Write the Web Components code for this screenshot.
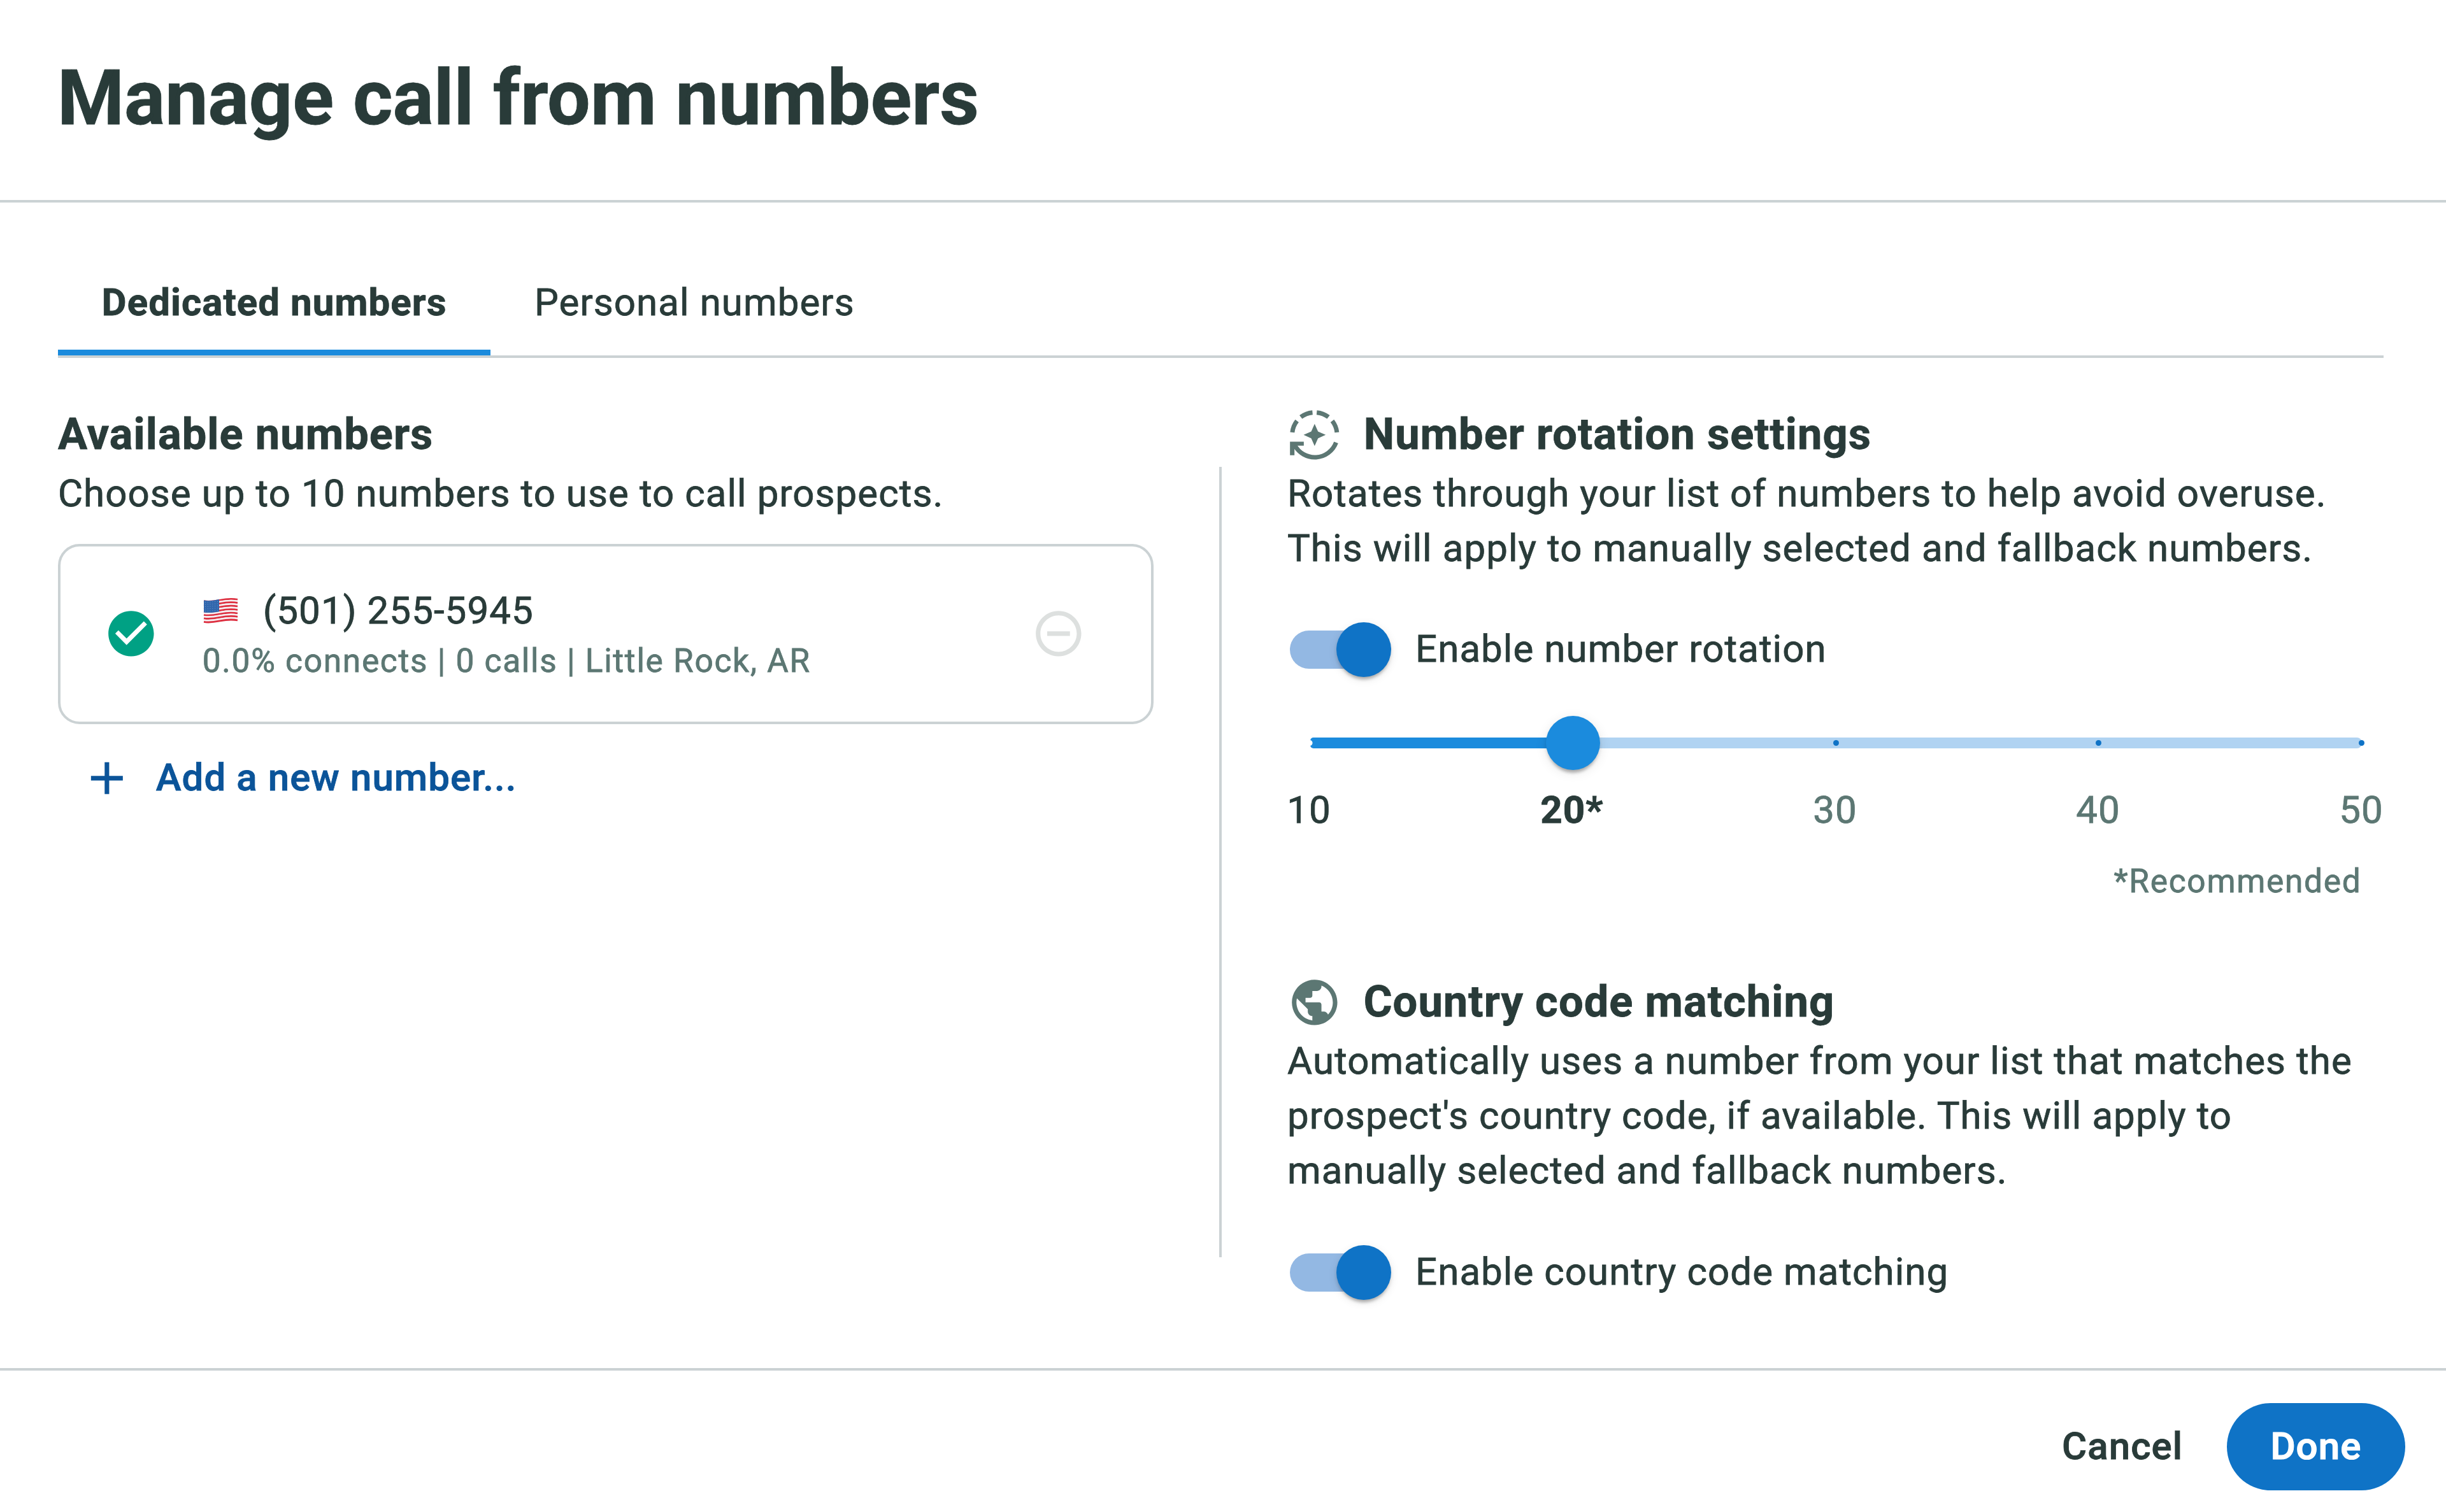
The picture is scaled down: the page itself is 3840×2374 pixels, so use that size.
<!DOCTYPE html>
<html lang="en">
<head>
<meta charset="utf-8">
<title>Manage call from numbers</title>
<style>
  html, body { margin: 0; height: 100%; }
  body {
    font-family: Roboto, "Liberation Sans", sans-serif;
    -webkit-text-stroke: .8px currentColor;
    background: #fff;
    color: #293b39;
    --ink: #293b39;
    --muted: #5c7773;
    --line: #cbd2d4;
    --primary: #0f73c6;
    --accent: #1b8bdd;
    overflow: hidden;
  }
</style>
</head>
<body>
<numbers-dialog></numbers-dialog>

<script>
const define = (name, html) => {
  const template = document.createElement('template');
  template.innerHTML = html;
  customElements.define(name, class extends HTMLElement {
    constructor() {
      super();
      this.attachShadow({ mode: 'open' }).append(template.content.cloneNode(true));
    }
  });
};

/* Icons: 24-unit Material grid drawn in an 86px box */
const ICONS = {
  check: '<path d="M12 2C6.48 2 2 6.48 2 12s4.48 10 10 10 10-4.48 10-10S17.52 2 12 2zm-2 15-5-5 1.41-1.41L10 14.17l7.59-7.59L19 8l-9 9z"/>',
  minus: '<path d="M7 11v2h10v-2H7zm5-9C6.48 2 2 6.48 2 12s4.48 10 10 10 10-4.48 10-10S17.52 2 12 2zm0 18c-4.41 0-8-3.59-8-8s3.59-8 8-8 8 3.59 8 8-3.59 8-8 8z"/>',
  plus: '<path d="M19 13h-6v6h-2v-6H5v-2h6V5h2v6h6v2z"/>',
  globe: '<path d="M12 2C6.48 2 2 6.48 2 12s4.48 10 10 10 10-4.48 10-10S17.52 2 12 2zm-1 17.93c-3.95-.49-7-3.85-7-7.93 0-.62.08-1.21.21-1.79L9 15v1c0 1.1.9 2 2 2v1.93zm6.9-2.54c-.26-.81-1-1.39-1.9-1.39h-1v-3c0-.55-.45-1-1-1H8v-2h2c.55 0 1-.45 1-1V7h2c1.1 0 2-.9 2-2v-.41c2.93 1.19 5 4.06 5 7.41 0 2.08-.8 3.97-2.1 5.39z"/>',
  rotate: `<g transform="translate(12 12) scale(.09337)">
    <g fill="none" stroke="currentColor" stroke-width="21">
      <path d="M-105-12A106 106 0 0 1-83-66"/>
      <path d="M-65-84A106 106 0 0 1-10-105.500"/>
      <path d="M105-12A106 106 0 0 0 83-66"/>
      <path d="M65-84A106 106 0 0 0 10-105.500"/>
      <path d="M101 36A107 107 0 0 1-94 48"/>
    </g>
    <path d="M-116 32H-51V51H-95V96H-116Z"/>
    <path d="M0-52 16-16 52 0 16 16 0 52-16 16-52 0-16-16Z"/>
  </g>`
};
customElements.define('ui-icon', class extends HTMLElement {
  connectedCallback() {
    if (this.shadowRoot) return;
    this.attachShadow({ mode: 'open' }).innerHTML = `
      <style>:host{display:block;width:85.7px;height:85.7px;flex:none}svg{display:block;width:100%;height:100%}</style>
      <svg viewBox="0 0 24 24" fill="currentColor">${ICONS[this.getAttribute('name')]}</svg>`;
  }
});

/* Waving United States flag */
customElements.define('us-flag', class extends HTMLElement {
  connectedCallback() {
    if (this.shadowRoot) return;
    const wave = y => `M0 ${y}C9 ${y + 1.5} 15 ${y + .5} 25 ${y - 1.5}S43 ${y - 4.5} 53 ${y - 2.5}`;
    const stripes = Array.from({ length: 13 }, (_, i) =>
      `<path d="${wave(5.8 + i * 2.72)}" stroke="${i % 2 ? '#f6eef0' : '#dd2f40'}"/>`).join('');
    let stars = '';
    for (let r = 0; r < 5; r++) for (let c = 0; c < 6; c++)
      stars += `<circle cx="${2.4 + c * 3.8}" cy="${7.4 + r * 3.5 - c * .25}" r=".5"/>`;
    this.attachShadow({ mode: 'open' }).innerHTML = `
      <style>:host{display:block;width:53px;height:41px;flex:none}svg{display:block;overflow:visible}</style>
      <svg width="53" height="41" viewBox="0 0 53 41">
        <g fill="none" stroke-width="2.9">${stripes}</g>
        <path d="M0 4.400C9 5.900 15 4.900 24 3.100V22.300C15 24.100 9 24.700 0 23.500Z" fill="#3267ad"/>
        <g fill="#7fa5d4">${stars}</g>
      </svg>`;
  }
});

define('dialog-header', `
  <style>
    :host{display:flex;align-items:flex-start;box-sizing:border-box;height:318px;padding:79px 90px 0;border-bottom:4px solid var(--line)}
    h1{margin:0;font-size:120px;line-height:150px;font-weight:700}
  </style>
  <h1><slot></slot></h1>`);

define('tab-bar', `
  <style>:host{display:flex;box-sizing:border-box;height:174px;border-bottom:4px solid var(--line)}</style>
  <slot></slot>`);

define('tab-item', `
  <style>
    :host{display:flex;align-items:center;box-sizing:border-box;padding:12px 68.6px 0;font-size:60px;letter-spacing:1.07px;border-bottom:9px solid transparent;height:170px}
    :host([selected]){font-weight:700;border-color:var(--accent)}
  </style>
  <slot></slot>`);

define('section-title', `
  <style>
    :host{display:flex;align-items:center;gap:34px;height:103px;font-size:68.57px;letter-spacing:1.07px;font-weight:700}
    h2{margin:0 0 2px;font:inherit}
    ::slotted(ui-icon){color:var(--muted)}
  </style>
  <slot name="icon"></slot><h2><slot></slot></h2>`);

define('body-text', `
  <style>:host{display:block;margin-top:-2px;font-size:60px;line-height:85.7px;letter-spacing:1.07px;white-space:nowrap}</style>
  <slot></slot>`);

define('number-card', `
  <style>
    :host{display:flex;align-items:center;box-sizing:border-box;height:283px;border:4px solid var(--line);border-radius:34px;padding:0 102px 0 68px}
    .ok{color:#00a184}
    .info{flex:1;margin-left:69px;display:flex;flex-direction:column}
    .phone{display:flex;align-items:center;font-size:60px;line-height:82px;letter-spacing:1.07px;gap:40px;margin-bottom:3px}
    .phone us-flag{margin-left:2px}
    .meta{font-size:51.43px;line-height:70px;letter-spacing:1.71px;color:var(--muted)}
    .remove{color:#dde0df}
  </style>
  <ui-icon class="ok" name="check"></ui-icon>
  <div class="info">
    <div class="phone"><us-flag></us-flag><span><slot name="phone"></slot></span></div>
    <div class="meta"><slot name="meta"></slot></div>
  </div>
  <ui-icon class="remove" name="minus"></ui-icon>`);

define('add-link', `
  <style>
    :host{display:flex;align-items:center;gap:34px;height:86px;padding-left:34px;color:#0b5499;font-size:60px;font-weight:500;letter-spacing:1.07px}
    span{margin-bottom:2px}
  </style>
  <ui-icon name="plus"></ui-icon><span><slot></slot></span>`);

define('toggle-switch', `
  <style>
    :host{display:flex;align-items:center;gap:38px;height:86px;font-size:60px;letter-spacing:1.07px;padding-left:4px}
    .track{display:flex;align-items:center;justify-content:flex-end;width:150px;height:60px;margin-right:9px;border-radius:30px;background:#93b8e3}
    .label{margin-bottom:3px}
    .knob{flex:none;width:86px;height:86px;margin-right:-9px;border-radius:50%;background:var(--primary);
      box-shadow:0 8px 5px -5px rgba(0,0,0,.2),0 4px 5px rgba(0,0,0,.12),0 4px 14px rgba(0,0,0,.1)}
  </style>
  <span class="track"><span class="knob"></span></span><span class="label"><slot></slot></span>`);

define('step-slider', `
  <style>
    :host{display:block}
    .rail{display:flex;align-items:center;height:86px;margin:0 34.500px 0 36px}
    .on{width:412.600px;height:17px;background:radial-gradient(circle at -1px 50%,#fff 4px,transparent 5px) var(--accent);border-radius:5px 0 0 5px}
    .thumb{flex:none;width:85px;height:85px;margin:0 -42.500px;border-radius:50%;background:var(--accent);z-index:1;
      box-shadow:0 10px 5px -6px rgba(0,0,0,.2),0 4px 5px rgba(0,0,0,.12),0 4px 18px rgba(0,0,0,.1)}
    .off{flex:1;display:flex;align-items:center;justify-content:space-between;height:17px;background:#b0d3f2;border-radius:0 8px 8px 0}
    i{width:9px;height:9px;border-radius:50%;background:var(--primary)}
    i:first-child{visibility:hidden;margin-left:-4.500px}
    i:last-child{margin-right:-4.500px}
    .labels{display:flex;justify-content:space-between;margin:20px -65px 0 -66px;font-size:60px;line-height:86px;letter-spacing:1.07px;color:var(--muted)}
    .labels span{width:200px;text-align:center}
    .labels .past,.labels .now{color:var(--ink)}
    .labels .now{font-weight:700}
    .note{margin:34px 34.500px 0 0;font-size:51.43px;line-height:70px;letter-spacing:1.71px;text-align:right;color:var(--muted)}
  </style>
  <div class="rail"><div class="on"></div><div class="thumb"></div><div class="off"><i></i><i></i><i></i><i></i></div></div>
  <div class="labels"><span class="past">10</span><span class="now">20*</span><span>30</span><span>40</span><span>50</span></div>
  <div class="note"><slot></slot></div>`);

define('dialog-button', `
  <style>
    :host{display:flex;align-items:center;box-sizing:border-box;height:137px;padding:0 68.6px 2px;border-radius:69px;font-size:60px;font-weight:500;letter-spacing:1.07px}
    :host([primary]){background:var(--primary);color:#fff;-webkit-text-stroke-width:1.2px}
  </style>
  <slot></slot>`);

define('numbers-dialog', `
  <style>
    :host{display:flex;flex-direction:column;width:3840px;height:2374px;overflow:hidden}
    main{flex:1;display:flex;flex-direction:column;padding:70px 98px 0 91px}
    .columns{flex:1;display:flex}
    .left{width:1720px;padding-top:69px}
    .left number-card{margin-top:36px}
    .left add-link{margin-top:42px}
    .rule{width:4px;height:1241px;margin:171px 103px 0}
    .rule{background:var(--line)}
    .right{flex:1;padding-top:69px}
    .right step-slider{margin-top:60px}
    .gap{margin-top:74px}
    .country{margin-top:103px}
    footer{box-sizing:border-box;height:226px;border-top:4px solid var(--line);display:flex;justify-content:flex-end;align-items:flex-start;padding:51px 64px 0 0}
  </style>
  <dialog-header>Manage call from numbers</dialog-header>
  <main>
    <tab-bar>
      <tab-item selected>Dedicated numbers</tab-item>
      <tab-item>Personal numbers</tab-item>
    </tab-bar>
    <div class="columns">
      <section class="left">
        <section-title>Available numbers</section-title>
        <body-text>Choose up to 10 numbers to use to call prospects.</body-text>
        <number-card>
          <span slot="phone">(501) 255-5945</span>
          <span slot="meta">0.0% connects | 0 calls | Little Rock, AR</span>
        </number-card>
        <add-link>Add a new number...</add-link>
      </section>
      <div class="rule"></div>
      <section class="right">
        <section-title><ui-icon slot="icon" name="rotate"></ui-icon>Number rotation settings</section-title>
        <body-text>Rotates through your list of numbers to help avoid overuse.<br>This will apply to manually selected and fallback numbers.</body-text>
        <toggle-switch class="gap">Enable number rotation</toggle-switch>
        <step-slider>*Recommended</step-slider>
        <section-title class="country"><ui-icon slot="icon" name="globe"></ui-icon>Country code matching</section-title>
        <body-text>Automatically uses a number from your list that matches the<br>prospect's country code, if available. This will apply to<br>manually selected and fallback numbers.</body-text>
        <toggle-switch class="gap">Enable country code matching</toggle-switch>
      </section>
    </div>
  </main>
  <footer>
    <dialog-button>Cancel</dialog-button>
    <dialog-button primary>Done</dialog-button>
  </footer>`);
</script>
</body>
</html>
